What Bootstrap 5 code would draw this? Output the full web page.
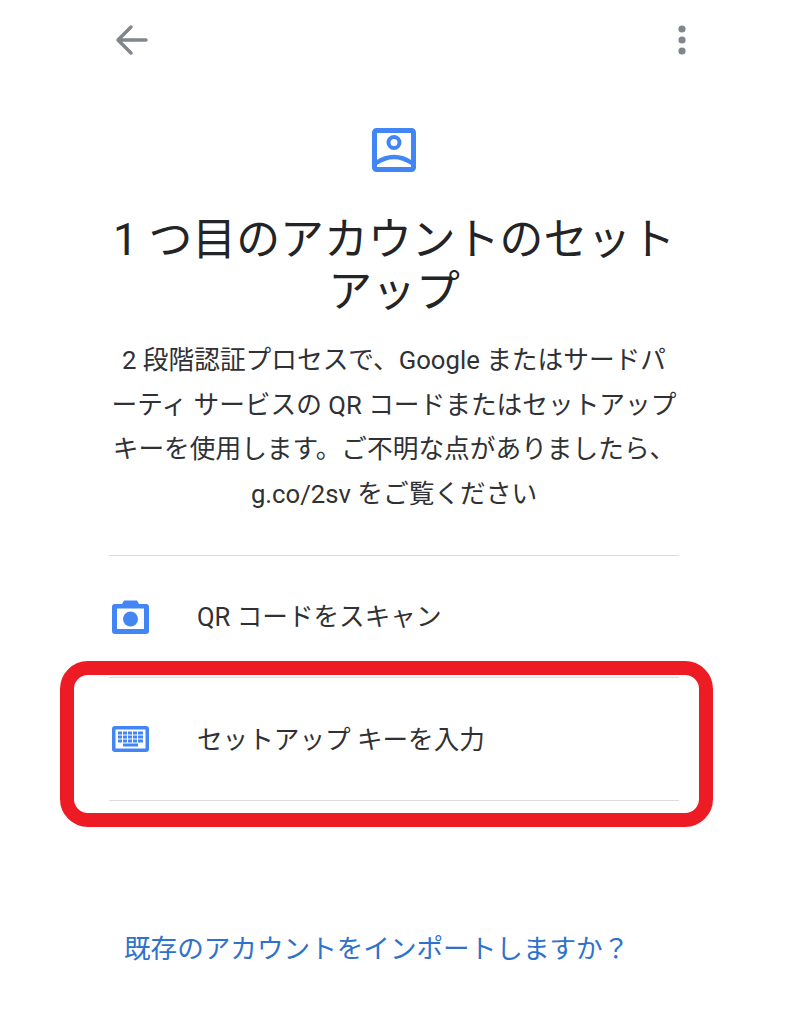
<!DOCTYPE html>
<html lang="ja">
<head>
<meta charset="utf-8">
<title>セットアップ</title>
<link href="https://cdn.jsdelivr.net/npm/bootstrap@5.3.0/dist/css/bootstrap.min.css" rel="stylesheet">
<style>
body{background:#fff;font-family:Roboto,"Noto Sans CJK JP",sans-serif;color:#202124;}
.screen{width:570px;margin-left:109px;padding-top:20px;height:1024px;}
.topbar{height:40px;}
.hero-icon{margin-top:68px;height:44px;}
.ttl{font-size:43.9px;line-height:52px;font-weight:400;margin:42px -10px 0;white-space:nowrap;color:#232427;}
.desc{font-size:25.7px;line-height:44.5px;color:#303134;margin:20px 0 0;white-space:nowrap;}
.rows{margin-top:39px;}
.rowitem{height:122px;border-top:1.5px solid #dadce0;gap:48px;padding-left:3px;font-size:25.6px;color:#303134;}
.rowitem span{position:relative;top:1px;}
.rowitem.last{border-bottom:1.5px solid #dadce0;height:124px;}
.redframe{left:60px;top:661px;width:653px;height:166px;border:14px solid #ed1c24;border-radius:28px;pointer-events:none;}
.imp{display:block;font-size:26.6px;color:#2f72cc;text-decoration:none;margin-top:128px;padding-left:15px;white-space:nowrap;}
</style>
</head>
<body>
<div class="position-relative">
<div class="screen">
  <div class="topbar d-flex justify-content-between align-items-center">
    <svg width="34" height="32" viewBox="0 0 34 32" style="margin-left:5px"><path d="M32 16H4M17 3 4 16l13 13" fill="none" stroke="#80868b" stroke-width="3.4" stroke-linecap="round" stroke-linejoin="round"/></svg>
    <svg width="10" height="30" viewBox="0 0 10 30" style="margin-right:-8px"><circle cx="5" cy="4" r="3.600" fill="#80868b"/><circle cx="5" cy="15" r="3.600" fill="#80868b"/><circle cx="5" cy="26" r="3.600" fill="#80868b"/></svg>
  </div>
  <div class="hero-icon text-center">
    <svg width="44" height="44" viewBox="0 0 44 44"><rect x="2.500" y="2.500" width="39" height="39" rx="2" fill="none" stroke="#4285f4" stroke-width="5"/><circle cx="22" cy="14.500" r="5.500" fill="none" stroke="#4285f4" stroke-width="4"/><path d="M4 35Q22 23 40 35" fill="none" stroke="#4285f4" stroke-width="4.500"/></svg>
  </div>
  <h1 class="ttl text-center">1 つ目のアカウントのセット<br>アップ</h1>
  <p class="desc text-center">2 段階認証プロセスで、Google またはサードパ<br>ーティ サービスの QR コードまたはセットアップ<br>キーを使用します。ご不明な点がありましたら、<br>g.co/2sv をご覧ください</p>
  <div class="rows">
    <div class="rowitem d-flex align-items-center">
      <svg width="37" height="34" viewBox="0 0 37 34"><path d="M10 4l2-3.500h13l2 3.500h7a3 3 0 0 1 3 3v24a3 3 0 0 1-3 3H3a3 3 0 0 1-3-3V7a3 3 0 0 1 3-3z" fill="#4285f4"/><rect x="5" y="8.500" width="27" height="20.500" fill="#fff"/><circle cx="18.500" cy="19" r="7.500" fill="#4285f4"/></svg>
      <span>QR コードをスキャン</span>
    </div>
    <div class="rowitem last d-flex align-items-center">
      <svg width="37" height="26" viewBox="0 0 37 26"><rect width="37" height="26" rx="3" fill="#4285f4"/><rect x="3.500" y="3.500" width="30" height="19" fill="#fff"/><path fill="#4285f4" d="M6 5.500h4v3H6zM11 5.500h4v3h-4zM16 5.500h4v3h-4zM21 5.500h4v3h-4zM26 5.500h5v3h-5zM6 9.500h4v3H6zM11 9.500h4v3h-4zM16 9.500h4v3h-4zM21 9.500h4v3h-4zM26 9.500h5v3h-5zM6 13.500h4v3H6zM11 13.500h4v3h-4zM16 13.500h4v3h-4zM21 13.500h4v3h-4zM26 13.500h5v3h-5zM11 17.500h15v3H11z"/></svg>
      <span>セットアップ キーを入力</span>
    </div>
  </div>
  <a class="imp" href="#">既存のアカウントをインポートしますか？</a>
</div>
<div class="redframe position-absolute"></div>
</div>
</body>
</html>
